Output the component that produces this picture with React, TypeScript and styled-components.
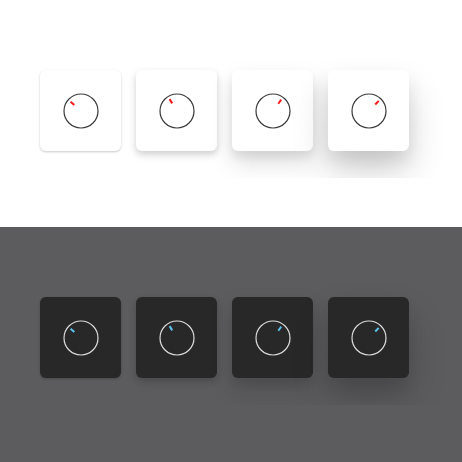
import React from "react";
import styled, { createGlobalStyle } from "styled-components";

const Global = createGlobalStyle`
  html, body { margin: 0; padding: 0; background: #ffffff; }
  body { font-family: "Liberation Sans", Arial, sans-serif; }
`;

type Mode = "light" | "dark";

const Section = styled.section<{ $mode: Mode }>`
  height: ${(p) => (p.$mode === "light" ? 227 : 235)}px;
  background: ${(p) => (p.$mode === "light" ? "#ffffff" : "#5c5c5e")};
`;

const Row = styled.div`
  display: flex;
  gap: 15px;
  padding: 70px 40px 27px;
  overflow: hidden;
`;

const shadows = [
  "0 1px 3px rgba(0,0,0,0.10), 0 1px 2px rgba(0,0,0,0.12)",
  "0 4px 10px rgba(0,0,0,0.10), 0 3px 6px rgba(0,0,0,0.10)",
  "0 12px 24px rgba(0,0,0,0.13), 0 6px 10px rgba(0,0,0,0.08)",
  "0 20px 36px rgba(0,0,0,0.18), 0 10px 16px rgba(0,0,0,0.08)",
];

const Card = styled.div<{ $mode: Mode; $level: number }>`
  width: 81px;
  height: 81px;
  border-radius: 6px;
  background: ${(p) => (p.$mode === "light" ? "#ffffff" : "#282828")};
  box-shadow: ${(p) => shadows[p.$level]};
  display: flex;
  align-items: center;
  justify-content: center;
`;

const KnobSvg = styled.svg`
  display: block;
`;

function Knob({ mode, angle }: { mode: Mode; angle: number }) {
  const rad = (angle * Math.PI) / 180;
  const c = 18;
  const x1 = c + Math.sin(rad) * 9;
  const y1 = c - Math.cos(rad) * 9;
  const x2 = c + Math.sin(rad) * 14;
  const y2 = c - Math.cos(rad) * 14;
  return (
    <KnobSvg width={36} height={36} viewBox="0 0 36 36">
      <circle
        cx={c}
        cy={c}
        r={17}
        fill="none"
        stroke={mode === "light" ? "#3a3a3a" : "#dcdcdc"}
        strokeWidth={1.2}
      />
      <line
        x1={x1}
        y1={y1}
        x2={x2}
        y2={y2}
        stroke={mode === "light" ? "#ff1a1a" : "#5cc3ec"}
        strokeWidth={2}
      />
    </KnobSvg>
  );
}

const angles = [-48, -32, 36, 44];

function Panel({ mode }: { mode: Mode }) {
  return (
    <Section $mode={mode}>
      <Row>
        {angles.map((a, i) => (
          <Card key={i} $mode={mode} $level={i}>
            <Knob mode={mode} angle={a} />
          </Card>
        ))}
      </Row>
    </Section>
  );
}

export default function App() {
  return (
    <>
      <Global />
      <Panel mode="light" />
      <Panel mode="dark" />
    </>
  );
}
